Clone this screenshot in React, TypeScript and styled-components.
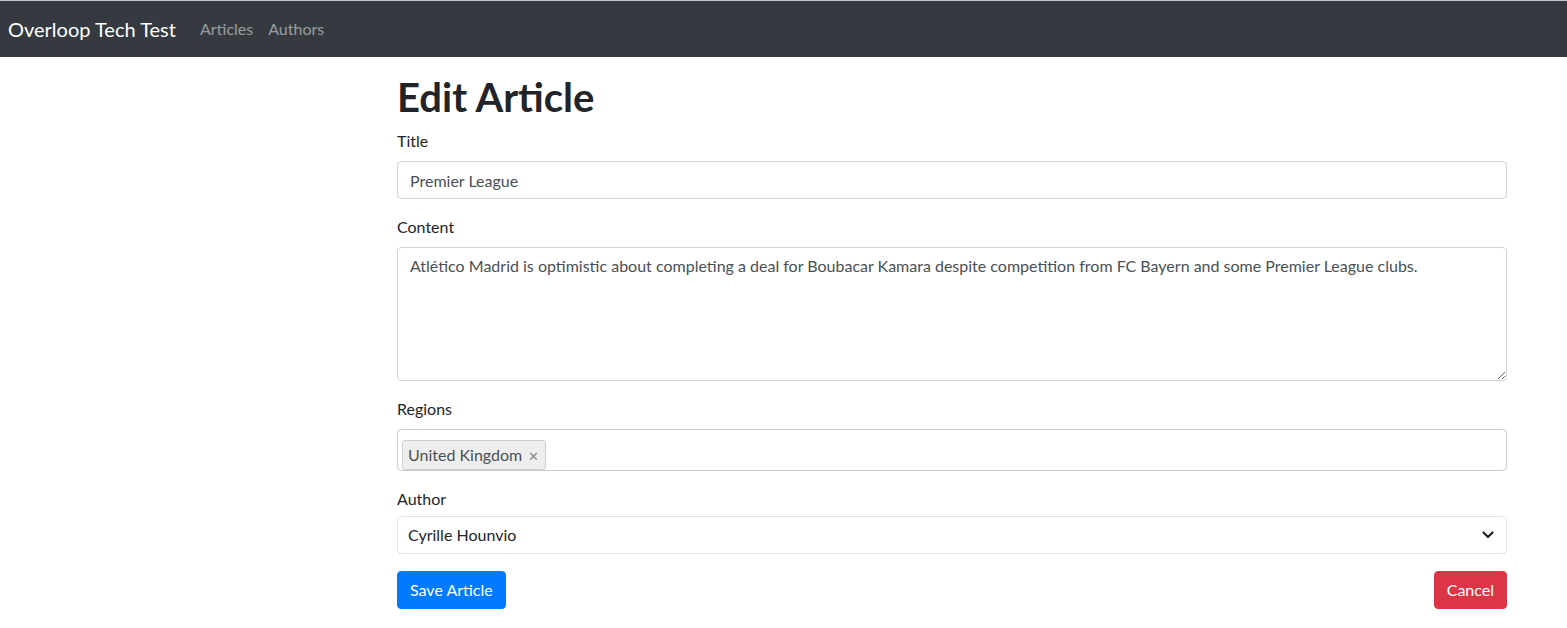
import React, { useState } from "react";
import styled, { createGlobalStyle } from "styled-components";

const GlobalStyle = createGlobalStyle`
  * { box-sizing: border-box; }
  body {
    margin: 0;
    background: #fff;
    font-family: Lato, "Liberation Sans", sans-serif;
    font-size: 16px;
    line-height: 1.5;
    color: #212529;
  }
`;

const Navbar = styled.nav`
  display: flex;
  align-items: center;
  height: 57px;
  padding: 0 8px;
  background: #343a40;
  border-top: 1px solid #c6c6c6;
`;

const Brand = styled.a`
  font-size: 20px;
  line-height: 30px;
  color: #fff;
  margin-right: 16px;
  text-decoration: none;
`;

const NavLink = styled.a`
  padding: 0 7px 0 8px;
  color: rgba(255, 255, 255, 0.5);
  text-decoration: none;
`;

const Container = styled.main`
  width: 1110px;
  margin: 16px 0 0 397px;
`;

const Heading = styled.h1`
  font-size: 40px;
  font-weight: 700;
  line-height: 48px;
  margin: 0 0 8px;
  color: #212529;
`;

const Group = styled.div<{ $gap?: number }>`
  margin-bottom: ${(p) => p.$gap ?? 16}px;
`;

const Label = styled.label<{ $gap?: number }>`
  display: block;
  margin-bottom: ${(p) => p.$gap ?? 8}px;
  line-height: 24px;
`;

const Input = styled.input`
  display: block;
  width: 100%;
  height: 38px;
  padding: 6px 12px;
  font: inherit;
  color: #495057;
  border: 1px solid #ced4da;
  border-radius: 4px;
  outline: none;
`;

const TextArea = styled.textarea`
  display: block;
  width: 100%;
  height: 134px;
  padding: 6px 12px;
  font: inherit;
  line-height: 24px;
  color: #495057;
  border: 1px solid #ced4da;
  border-radius: 4px;
  outline: none;
`;

const TagBox = styled.div`
  display: flex;
  align-items: flex-end;
  height: 42px;
  padding: 0 4px;
  border: 1px solid #cccccc;
  border-radius: 4px;
`;

const Tag = styled.span`
  display: inline-flex;
  align-items: center;
  height: 30px;
  padding: 0 6px 0 5px;
  background: #eeeeee;
  border: 1px solid #cfcfcf;
  border-radius: 3px;
  color: #495057;
`;

const TagRemove = styled.span`
  margin-left: 6px;
  font-size: 13px;
  color: #888;
  line-height: 1;
  margin-top: 3px;
`;

const SelectWrap = styled.div`
  display: flex;
  align-items: center;
  justify-content: space-between;
  height: 38px;
  padding: 0 12px 0 10px;
  border: 1px solid #e2e2e2;
  border-radius: 4px;
  color: #212529;
`;

const Actions = styled.div`
  display: flex;
  justify-content: space-between;
`;

const Button = styled.button<{ $variant: "primary" | "danger" }>`
  height: 38px;
  padding: 0 12px;
  font: inherit;
  color: #fff;
  border: 1px solid
    ${(p) => (p.$variant === "primary" ? "#007bff" : "#dc3545")};
  background: ${(p) => (p.$variant === "primary" ? "#007bff" : "#dc3545")};
  border-radius: 4px;
  cursor: pointer;
`;

export default function App() {
  const [title, setTitle] = useState("Premier League");
  const [content, setContent] = useState(
    "Atlético Madrid is optimistic about completing a deal for Boubacar Kamara despite competition from FC Bayern and some Premier League clubs."
  );

  return (
    <>
      <GlobalStyle />
      <Navbar>
        <Brand href="#">Overloop Tech Test</Brand>
        <NavLink href="#">Articles</NavLink>
        <NavLink href="#">Authors</NavLink>
      </Navbar>
      <Container>
        <Heading>Edit Article</Heading>
        <Group>
          <Label>Title</Label>
          <Input value={title} onChange={(e) => setTitle(e.target.value)} />
        </Group>
        <Group>
          <Label>Content</Label>
          <TextArea
            value={content}
            onChange={(e) => setContent(e.target.value)}
          />
        </Group>
        <Group>
          <Label>Regions</Label>
          <TagBox>
            <Tag>
              United Kingdom<TagRemove>✕</TagRemove>
            </Tag>
          </TagBox>
        </Group>
        <Group $gap={17}>
          <Label as="div" $gap={5}>
            Author
          </Label>
          <SelectWrap>
            <span>Cyrille Hounvio</span>
            <svg width="12" height="8" viewBox="0 0 12 8">
              <path
                d="M1.5 1.5 L6 6 L10.5 1.5"
                fill="none"
                stroke="#212529"
                strokeWidth="2.2"
                strokeLinecap="round"
                strokeLinejoin="round"
              />
            </svg>
          </SelectWrap>
        </Group>
        <Actions>
          <Button $variant="primary">Save Article</Button>
          <Button $variant="danger">Cancel</Button>
        </Actions>
      </Container>
    </>
  );
}
